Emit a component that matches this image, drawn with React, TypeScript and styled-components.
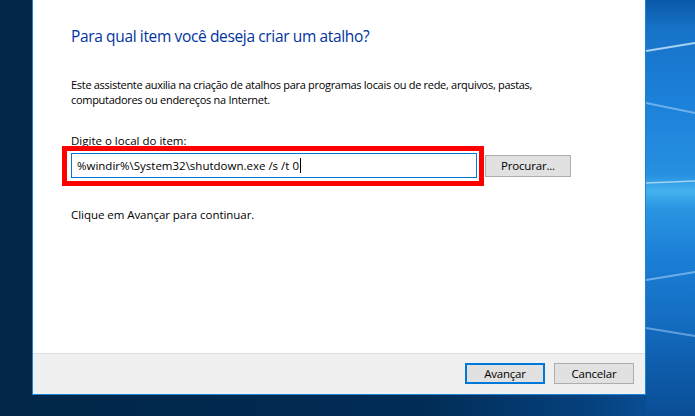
import * as React from "react";
import styled, { createGlobalStyle } from "styled-components";

const GlobalStyle = createGlobalStyle`
  html, body {
    margin: 0;
    padding: 0;
    background: #012648;
    overflow: hidden;
  }
  * {
    box-sizing: border-box;
  }
`;

function Wallpaper() {
  return (
    <WallpaperSvg viewBox="0 0 49 416" preserveAspectRatio="none">
      <defs>
        <linearGradient id="sky" x1="0" y1="0" x2="0" y2="1">
          <stop offset="0" stopColor="#0a58a8" />
          <stop offset="0.07" stopColor="#1773c8" />
          <stop offset="0.25" stopColor="#1c81da" />
          <stop offset="0.42" stopColor="#2790e0" />
          <stop offset="0.46" stopColor="#44b2ee" />
          <stop offset="0.5" stopColor="#2a95e2" />
          <stop offset="0.62" stopColor="#1b7fd6" />
          <stop offset="0.78" stopColor="#146cc0" />
          <stop offset="0.9" stopColor="#0d5aa8" />
          <stop offset="1" stopColor="#0a4d95" />
        </linearGradient>
      </defs>
      <rect x="0" y="0" width="49" height="416" fill="url(#sky)" />
      <path d="M0 51 L49 43" stroke="#d8f0ff" strokeOpacity="0.75" strokeWidth="2" />
      <path d="M0 103 L49 113" stroke="#cfe9ff" strokeOpacity="0.45" strokeWidth="2" />
      <path d="M0 183 L49 181" stroke="#e6f8ff" strokeOpacity="0.6" strokeWidth="1.5" />
      <path d="M0 280 L49 272" stroke="#bfe2ff" strokeOpacity="0.5" strokeWidth="2" />
      <path d="M0 328 L49 336" stroke="#bfe2ff" strokeOpacity="0.45" strokeWidth="2" />
    </WallpaperSvg>
  );
}

function App() {
  return (
    <>
      <GlobalStyle />
      <Desktop>
        <LeftStrip />
        <Window>
          <Content>
            <Instruction>Para qual item você deseja criar um atalho?</Instruction>
            <Paragraph>
              Este assistente auxilia na criação de atalhos para programas locais ou de rede,
              arquivos, pastas,
              <br />
              computadores ou endereços na Internet.
            </Paragraph>
            <Label>Digite o local do item:</Label>
            <LocationRow>
              <FieldWrap>
                <TextBox>
                  %windir%\System32\shutdown.exe /s /t 0
                  <Caret />
                </TextBox>
                <Highlight />
              </FieldWrap>
              <Button $width={86} $height={22}>
                Procurar...
              </Button>
            </LocationRow>
            <Hint>Clique em Avançar para continuar.</Hint>
          </Content>
          <Footer>
            <Button $primary $width={80} $height={21}>
              Avançar
            </Button>
            <Button $width={80} $height={21}>
              Cancelar
            </Button>
          </Footer>
        </Window>
        <Wallpaper />
      </Desktop>
    </>
  );
}

const Desktop = styled.div`
  display: flex;
  align-items: flex-start;
  width: 695px;
  height: 416px;
  background: linear-gradient(90deg, #012648 0%, #012c55 60%, #06417e 85%, #0a58a6 100%);
  font-family: "Open Sans", "Noto Sans", sans-serif;
`;

const LeftStrip = styled.div`
  width: 32px;
  height: 416px;
  flex-shrink: 0;
  background: #012648;
`;

const Window = styled.div`
  display: flex;
  flex-direction: column;
  width: 614px;
  height: 395px;
  flex-shrink: 0;
  background: #ffffff;
  border: 1px solid #1883d7;
  border-top: none;
`;

const WallpaperSvg = styled.svg`
  display: block;
  flex: 1;
  height: 416px;
`;

const Content = styled.div`
  flex: 1;
  display: flex;
  flex-direction: column;
  align-items: flex-start;
  padding: 26px 0 0 38px;
  color: #000000;
`;

const Instruction = styled.h1`
  margin: 0;
  font-size: 15.5px;
  line-height: 20px;
  font-weight: 400;
  color: #0033a0;
  letter-spacing: -0.36px;
`;

const Paragraph = styled.p`
  margin: 31px 0 0;
  font-size: 11px;
  line-height: 15px;
  letter-spacing: -0.3px;
`;

const Label = styled.div`
  margin-top: 26px;
  font-size: 11.5px;
  line-height: 15px;
  letter-spacing: 0;
`;

const LocationRow = styled.div`
  display: flex;
  align-items: center;
  gap: 8px;
  margin-top: 5px;
`;

const FieldWrap = styled.div`
  position: relative;
`;

const TextBox = styled.div`
  display: flex;
  align-items: center;
  width: 406px;
  height: 25px;
  padding: 0 5px;
  border: 1px solid #0078d7;
  background: #ffffff;
  font-size: 11.5px;
  letter-spacing: 0;
  white-space: pre;
`;

const Caret = styled.span`
  display: inline-block;
  width: 1px;
  height: 15px;
  margin-left: 1px;
  background: #000000;
`;

const Highlight = styled.div`
  position: absolute;
  left: -9px;
  right: -7px;
  top: -7px;
  bottom: -8px;
  border: 5px solid #ff0000;
  pointer-events: none;
`;

const Button = styled.div<{ $primary?: boolean; $width: number; $height: number }>`
  display: flex;
  align-items: center;
  justify-content: center;
  width: ${(p) => p.$width}px;
  height: ${(p) => p.$height}px;
  background: #e1e1e1;
  border: ${(p) => (p.$primary ? "2px solid #0078d7" : "1px solid #adadad")};
  font-size: 11.5px;
  letter-spacing: -0.2px;
  color: #000000;
`;

const Hint = styled.div`
  margin-top: 29px;
  font-size: 11.5px;
  line-height: 15px;
  letter-spacing: -0.05px;
`;

const Footer = styled.div`
  display: flex;
  justify-content: flex-end;
  align-items: flex-start;
  gap: 9px;
  height: 41px;
  padding: 9px 11px 0 0;
  background: #f0f0f0;
  border-top: 1px solid #dfdfdf;
`;

export default App;
